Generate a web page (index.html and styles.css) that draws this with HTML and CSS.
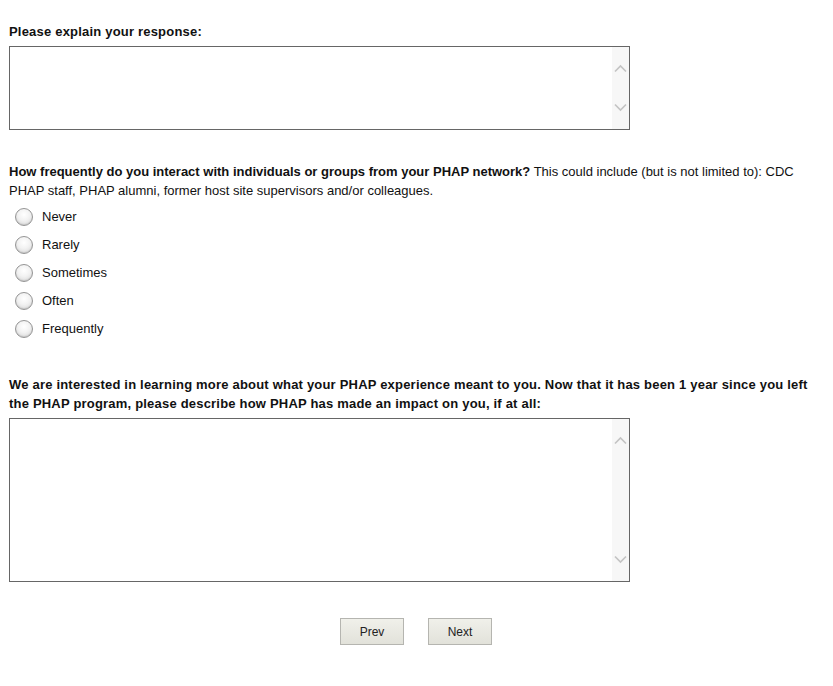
FILE: index.html
```html
<!DOCTYPE html>
<html>
<head>
<meta charset="utf-8">
<link rel="stylesheet" href="styles.css">
</head>
<body>
<div class="page">
  <div class="question q1">
    <div class="qtext spaced"><b>Please explain your response:</b></div>
    <div class="textbox short">
      <textarea class="ta"></textarea>
      <div class="sbar">
        <svg width="17" height="12" viewBox="0 0 17 12"><path d="M3 8.5 L8.5 3 L14 8.5" fill="none" stroke="#c4c4c4" stroke-width="1.7"/></svg>
        <svg width="17" height="12" viewBox="0 0 17 12"><path d="M3 3.5 L8.5 9 L14 3.5" fill="none" stroke="#c4c4c4" stroke-width="1.7"/></svg>
      </div>
    </div>
  </div>

  <div class="question q2">
    <div class="qtext"><b>How frequently do you interact with individuals or groups from your PHAP network?</b> This could include (but is not limited to): CDC PHAP staff, PHAP alumni, former host site supervisors and/or colleagues.</div>
    <div class="options">
      <label class="opt"><input type="radio" name="freq" class="radio"><span>Never</span></label>
      <label class="opt"><input type="radio" name="freq" class="radio"><span>Rarely</span></label>
      <label class="opt"><input type="radio" name="freq" class="radio"><span>Sometimes</span></label>
      <label class="opt"><input type="radio" name="freq" class="radio"><span>Often</span></label>
      <label class="opt"><input type="radio" name="freq" class="radio"><span>Frequently</span></label>
    </div>
  </div>

  <div class="question q3">
    <div class="qtext spaced"><b>We are interested in learning more about what your PHAP experience meant to you. Now that it has been 1 year since you left the PHAP program, please describe how PHAP has made an impact on you, if at all:</b></div>
    <div class="textbox tall">
      <textarea class="ta"></textarea>
      <div class="sbar">
        <svg width="17" height="12" viewBox="0 0 17 12"><path d="M3 8.5 L8.5 3 L14 8.5" fill="none" stroke="#c4c4c4" stroke-width="1.7"/></svg>
        <svg width="17" height="12" viewBox="0 0 17 12"><path d="M3 3.5 L8.5 9 L14 3.5" fill="none" stroke="#c4c4c4" stroke-width="1.7"/></svg>
      </div>
    </div>
  </div>

  <div class="nav">
    <button class="btn">Prev</button>
    <button class="btn">Next</button>
  </div>
</div>
</body>
</html>
```

FILE: styles.css
```css
html, body {
  margin: 0;
  padding: 0;
  background: #fff;
}
.page {
  font-family: "Liberation Sans", Arial, sans-serif;
  font-size: 13px;
  color: #111;
  padding: 22px 0 0 9px;
}
.qtext {
  line-height: 19px;
  padding-right: 12px;
}
.qtext b {
  font-weight: bold;
}
.qtext.spaced b {
  letter-spacing: 0.2px;
}
.textbox {
  margin-top: 5px;
  width: 619px;
  border: 1px solid #666;
  display: flex;
  background: #fff;
}
.textbox.short { height: 82px; }
.textbox.tall { height: 162px; }
.ta {
  flex: 1;
  border: none;
  outline: none;
  resize: none;
  margin: 0;
  padding: 2px;
  font-family: inherit;
  font-size: 13px;
  background: #fff;
}
.sbar {
  width: 17px;
  background: #f7f7f7;
  display: flex;
  flex-direction: column;
  justify-content: space-between;
  padding: 16px 0 16px;
}
.sbar svg { display: block; }
.q2 { margin-top: 32px; }
.options {
  margin-top: 3px;
}
.opt {
  display: flex;
  align-items: center;
  height: 28px;
  padding-left: 6px;
}
.radio {
  appearance: none;
  -webkit-appearance: none;
  margin: 0 9px 0 0;
  width: 18px;
  height: 18px;
  border-radius: 50%;
  border: 1px solid #959595;
  background: radial-gradient(circle at 50% 35%, #ffffff 0%, #f2f2f2 45%, #d2d2d2 100%);
  box-shadow: inset 0 -1px 1px rgba(0,0,0,0.1);
}
.opt span { line-height: 16px; }
.q3 { margin-top: 32px; }
.nav {
  display: flex;
  justify-content: center;
  gap: 24px;
  margin-top: 36px;
  padding-right: 10px;
}
.btn {
  width: 64px;
  height: 27px;
  border: 1px solid #b5b5b0;
  background: linear-gradient(#f0f0ea, #e2e2da);
  font-family: "Liberation Sans", Arial, sans-serif;
  font-size: 12px;
  color: #222;
  padding: 0;
  border-radius: 0;
}
```
